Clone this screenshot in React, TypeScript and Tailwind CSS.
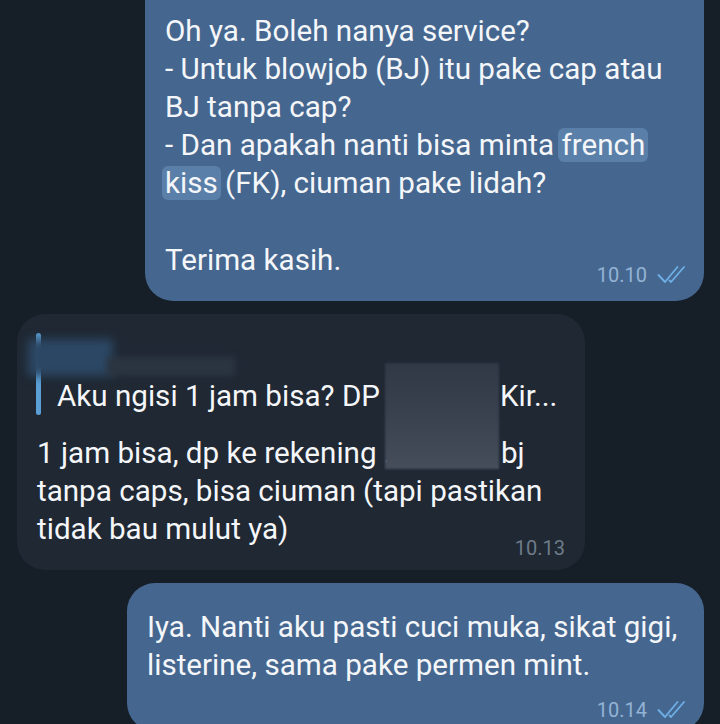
import React from "react";

function Checks() {
  return (
    <svg width="30" height="20" viewBox="0 0 30 20" fill="none" className="shrink-0">
      <path d="M1.5 10 L8 17 L20.5 2" stroke="#6dade4" strokeWidth="1.9" strokeLinecap="round" strokeLinejoin="round" />
      <path d="M12.5 15.5 L14 17 L27 2" stroke="#6dade4" strokeWidth="1.9" strokeLinecap="round" strokeLinejoin="round" />
    </svg>
  );
}

export default function App() {
  return (
    <div className="w-[720px] h-[724px] bg-[#161e28] overflow-hidden flex flex-col font-['Roboto',sans-serif] text-[#f4f6f9]">
      {/* Outgoing bubble 1 */}
      <div className="ml-[145px] w-[559px] bg-[#45678f] rounded-b-[28px] pt-[12px] pb-[15px] pl-[20px] pr-[17px] text-[29.6px] leading-[38px]">
        <div className="whitespace-nowrap">Oh ya. Boleh nanya service?</div>
        <div className="whitespace-nowrap">- Untuk blowjob (BJ) itu pake cap atau</div>
        <div className="whitespace-nowrap">BJ tanpa cap?</div>
        <div className="whitespace-nowrap">
          - Dan apakah nanti bisa minta{" "}
          <span className="bg-[#5a7fa8] rounded-[6px] px-[3px] -mx-[3px]">french</span>
        </div>
        <div className="whitespace-nowrap">
          <span className="bg-[#5a7fa8] rounded-[6px] px-[3px] -mx-[3px]">kiss</span> (FK), ciuman pake lidah?
        </div>
        <div className="h-[39px]" />
        <div className="whitespace-nowrap">Terima kasih.</div>
        <div className="flex justify-end items-center gap-[10px] -mt-[15px] text-[20px] leading-[22px] text-[#93b3d5]">
          <span>10.10</span>
          <Checks />
        </div>
      </div>

      {/* Incoming bubble */}
      <div className="relative mt-[13px] ml-[17px] w-[568px] bg-[#1f2833] rounded-[28px] pt-[19px] pb-[11px] pl-[19px] pr-[20px] text-[29.6px] leading-[38px]">
        <div className="flex gap-[16px]">
          <div className="w-[5px] rounded-full bg-[#5a9fd6]" />
          <div className="flex flex-col">
            <div className="h-[44px]" />
            <div className="whitespace-nowrap flex">
              <span className="inline-block w-[443px]">Aku ngisi 1 jam bisa? DP</span>
              <span>Kir...</span>
            </div>
          </div>
        </div>
        <div className="mt-[19px] pl-[1px]">
          <div className="whitespace-nowrap flex">
            <span className="inline-block w-[464px]">1 jam bisa, dp ke rekening .</span>
            <span>bj</span>
          </div>
          <div className="whitespace-nowrap">tanpa caps, bisa ciuman (tapi pastikan</div>
          <div className="whitespace-nowrap">tidak bau mulut ya)</div>
        </div>
        <div className="flex justify-end -mt-[11px] text-[20px] leading-[22px] text-[#6e7b88]">
          <span>10.13</span>
        </div>

        {/* redactions */}
        <div className="absolute left-[11px] top-[25px] w-[85px] h-[37px] bg-[#2c4764] blur-[5px]" />
        <div className="absolute left-[90px] top-[43px] w-[128px] h-[19px] bg-[#2b3541] blur-[3px]" />
        <div className="absolute left-[368px] top-[49px] w-[114px] h-[106px] bg-gradient-to-b from-[#303945] via-[#39424e] to-[#454e5a] blur-[1px]" />
      </div>

      {/* Outgoing bubble 3 */}
      <div className="mt-[13px] ml-[127px] w-[577px] bg-[#45678f] rounded-[28px] pt-[25px] pb-[10px] pl-[20px] pr-[17px] text-[29.6px] leading-[38px]">
        <div className="whitespace-nowrap">Iya. Nanti aku pasti cuci muka, sikat gigi,</div>
        <div className="whitespace-nowrap">listerine, sama pake permen mint.</div>
        <div className="flex justify-end items-center gap-[10px] mt-[15px] text-[20px] leading-[22px] text-[#93b3d5]">
          <span>10.14</span>
          <Checks />
        </div>
      </div>
    </div>
  );
}
